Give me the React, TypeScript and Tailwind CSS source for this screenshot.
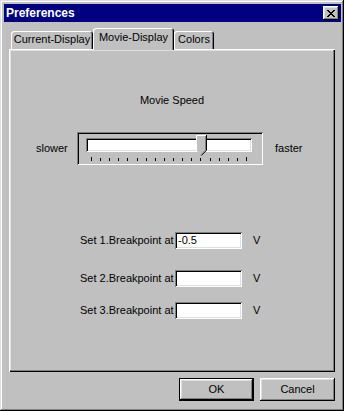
const raised =
  'shadow-[inset_-1px_-1px_0_#000,inset_1px_1px_0_#fff,inset_-2px_-2px_0_#808080,inset_2px_2px_0_#dfdfdf]';
const sunken =
  'shadow-[inset_1px_1px_0_#808080,inset_-1px_-1px_0_#fff,inset_2px_2px_0_#000,inset_-2px_-2px_0_#dfdfdf]';

const ticks = Array.from({ length: 18 }, (_, i) => 14 + Math.round((i * 155) / 17));

function Tab({ label, active, width }: { label: string; active?: boolean; width: number }) {
  return (
    <div
      style={{ width }}
      className={
        active
          ? 'h-[22px] bg-[#c0c0c0] rounded-t-[3px] flex items-start justify-center pt-[3px] shadow-[inset_1px_1px_0_#fff,inset_-1px_0_0_#000,inset_-2px_0_0_#808080]'
          : 'mt-[3px] h-[18px] bg-[#c0c0c0] rounded-t-[3px] flex items-start justify-center pt-[2px] shadow-[inset_1px_1px_0_#fff,inset_-1px_0_0_#000,inset_-2px_0_0_#808080]'
      }
    >
      {label}
    </div>
  );
}

function BreakpointRow({ n, value, className }: { n: number; value?: string; className: string }) {
  return (
    <div className={`flex items-center pl-[71px] h-[17px] ${className}`}>
      <span className="w-[95px] whitespace-nowrap">Set {n}.Breakpoint at</span>
      <div className={`w-[67px] h-[17px] bg-white pl-[3px] leading-[17px] ${sunken}`}>{value}</div>
      <span className="ml-[11px]">V</span>
    </div>
  );
}

export default function App() {
  return (
    <div className="w-[344px] h-[411px] bg-[#c0c0c0] flex flex-col pl-[4px] pr-[3px] pt-[4px] text-[11px] leading-[13px] text-black font-['Liberation_Sans',Arial,sans-serif] shadow-[inset_-1px_-1px_0_#000,inset_1px_1px_0_#dfdfdf,inset_-2px_-2px_0_#808080,inset_2px_2px_0_#fff]">
      <div className="h-[18px] bg-[#000080] flex items-center justify-between pl-[2px] pr-[2px]">
        <span className="text-white font-bold text-[12px] leading-[14px]">Preferences</span>
        <div className={`w-[16px] h-[14px] bg-[#c0c0c0] flex items-center justify-center ${raised}`}>
          <svg width="8" height="7" viewBox="0 0 8 7">
            <path
              fill="#000"
              d="M0 0h2v1H0z M6 0h2v1H6z M1 1h2v1H1z M5 1h2v1H5z M2 2h4v1H2z M3 3h2v1H3z M2 4h4v1H2z M1 5h2v1H1z M5 5h2v1H5z M0 6h2v1H0z M6 6h2v1H6z"
            />
          </svg>
        </div>
      </div>

      <div className="ml-[5px] mr-[6px] mt-[6px] flex flex-col">
        <div className="relative z-10 h-[21px] flex items-start pl-[2px]">
          <Tab label="Current-Display" width={82} />
          <Tab label="Movie-Display" width={81} active />
          <Tab label="Colors" width={40} />
        </div>
        <div className="h-[323px] flex flex-col shadow-[inset_1px_1px_0_#fff,inset_-1px_-1px_0_#000,inset_-2px_-2px_0_#808080,inset_2px_2px_0_#dfdfdf]">
          <div className="pt-[45px] text-center">Movie Speed</div>

          <div className="mt-[25px] flex items-center pl-[27px]">
            <span className="w-[41px]">slower</span>
            <div className="relative w-[186px] h-[33px] shadow-[inset_1px_1px_0_#808080,inset_-1px_-1px_0_#fff,inset_2px_2px_0_#000]">
              <div className={`ml-[9px] mt-[6px] w-[166px] h-[14px] bg-white ${sunken}`} />
              <svg className="block mt-[5px]" width="186" height="5">
                {ticks.map((x, i) => (
                  <rect
                    key={x}
                    x={x}
                    y={i === 0 || i === ticks.length - 1 ? 0 : 1}
                    width="1"
                    height={i === 0 || i === ticks.length - 1 ? 4 : 3}
                    fill="#000"
                  />
                ))}
              </svg>
              <svg className="absolute left-[119px] top-[3px]" width="11" height="21" viewBox="0 0 11 21">
                <polygon points="0,0 11,0 11,15 5.5,20.5 0,15" fill="#c0c0c0" />
                <polyline points="0.5,15.5 0.5,0.5 10,0.5" fill="none" stroke="#fff" />
                <polyline points="10.5,0 10.5,15.3 5.3,20.5" fill="none" stroke="#000" />
                <polyline points="9.5,1 9.5,15 5,19.5" fill="none" stroke="#808080" />
              </svg>
            </div>
            <span className="ml-[12px]">faster</span>
          </div>

          <BreakpointRow n={1} value="-0.5" className="mt-[67px]" />
          <BreakpointRow n={2} className="mt-[21px]" />
          <BreakpointRow n={3} className="mt-[15px]" />
        </div>
      </div>

      <div className="mt-[6px] mr-[6px] flex justify-end gap-[6px]">
        <div className="w-[75px] h-[23px] border border-black">
          <div className={`h-full flex items-center justify-center ${raised}`}>OK</div>
        </div>
        <div className={`w-[75px] h-[23px] flex items-center justify-center ${raised}`}>Cancel</div>
      </div>
    </div>
  );
}
